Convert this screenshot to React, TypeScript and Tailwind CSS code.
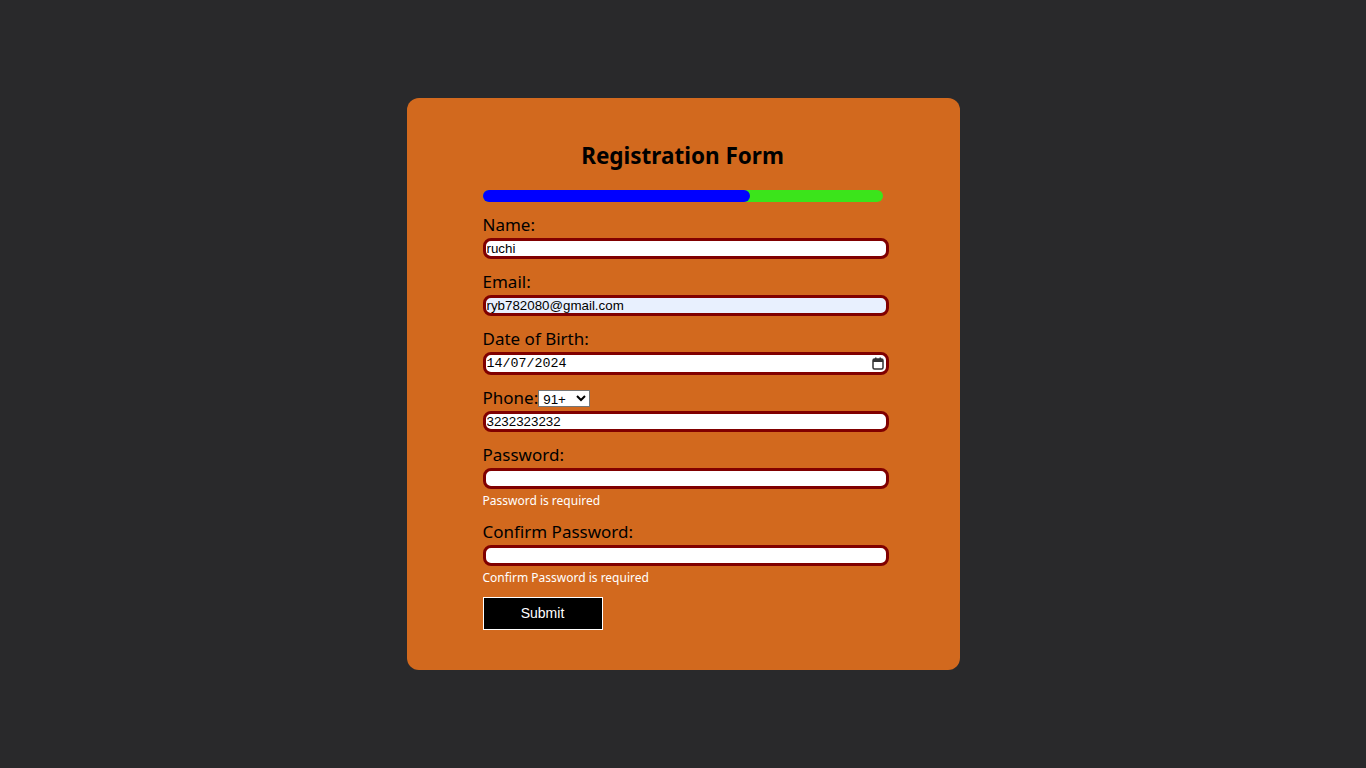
import { useState } from "react"

const labelCls = "block text-[17px] leading-6 text-black font-['Noto_Sans',sans-serif]"
const inputCls =
  "mt-px block h-[21px] w-[406px] rounded-lg border-[3px] border-[#800000] bg-white px-[1px] text-[13.33px] leading-[15px] text-black outline-none font-['Liberation_Sans',Arial,sans-serif]"
const errorCls = "mt-1 text-[12px] leading-4 text-white font-['Noto_Sans',sans-serif]"

function CalendarIcon() {
  return (
    <svg width="12" height="13" viewBox="0 0 12 13" fill="none" className="text-[#333]">
      <rect x="1" y="2" width="10" height="10" rx="1.5" stroke="currentColor" strokeWidth="1.5" />
      <rect x="1" y="2" width="10" height="3" fill="currentColor" />
      <rect x="3" y="0.5" width="1.5" height="2.5" fill="currentColor" />
      <rect x="7.5" y="0.5" width="1.5" height="2.5" fill="currentColor" />
    </svg>
  )
}

export default function App() {
  const [name, setName] = useState("ruchi")
  const [email, setEmail] = useState("ryb782080@gmail.com")
  const [phone, setPhone] = useState("3232323232")
  const [code, setCode] = useState("91+")

  return (
    <div className="flex min-h-screen items-center justify-center bg-[#29292b]">
      <div className="w-[553px] rounded-xl bg-[#d2691e] px-[76px] pt-[42px] pb-10">
        <form className="w-[400px]" onSubmit={(e) => e.preventDefault()}>
          <h2 className="text-center text-[22.5px] leading-8 font-bold text-black font-['Noto_Sans',sans-serif]">
            Registration Form
          </h2>

          {/* progress */}
          <div className="mt-[18px] h-3 w-[400px] rounded-full bg-[#3be41b]">
            <div className="h-3 w-[267px] rounded-full bg-[#0000ff]" />
          </div>

          <div className="mt-[11px]">
            <label className={labelCls}>Name:</label>
            <input className={inputCls} value={name} onChange={(e) => setName(e.target.value)} />
          </div>

          <div className="mt-[11px]">
            <label className={labelCls}>Email:</label>
            <input
              className={inputCls + " !bg-[#e8f0fe]"}
              value={email}
              onChange={(e) => setEmail(e.target.value)}
            />
          </div>

          <div className="mt-[11px]">
            <label className={labelCls}>Date of Birth:</label>
            <div className="mt-px flex h-[23px] w-[406px] items-center justify-between rounded-lg border-[3px] border-[#800000] bg-white pr-[2px] pl-[1px]">
              <span className="text-[13.33px] leading-[15px] text-black font-['Liberation_Mono',monospace]">
                14/07/2024
              </span>
              <CalendarIcon />
            </div>
          </div>

          <div className="mt-[11px]">
            <div className="flex h-6 items-center">
              <label className={labelCls}>Phone:</label>
              <select
                value={code}
                onChange={(e) => setCode(e.target.value)}
                className="mt-px h-[17px] w-[52px] border border-[#767676] bg-white text-[13.33px] leading-[15px] text-black font-['Liberation_Sans',Arial,sans-serif]"
              >
                <option>91+</option>
                <option>1+</option>
                <option>44+</option>
              </select>
            </div>
            <input className={inputCls} value={phone} onChange={(e) => setPhone(e.target.value)} />
          </div>

          <div className="mt-[11px]">
            <label className={labelCls}>Password:</label>
            <input type="password" className={inputCls} />
            <p className={errorCls}>Password is required</p>
          </div>

          <div className="mt-[11px]">
            <label className={labelCls}>Confirm Password:</label>
            <input type="password" className={inputCls} />
            <p className={errorCls}>Confirm Password is required</p>
          </div>

          <button
            type="submit"
            className="mt-[11px] h-[33px] w-[120px] border border-white bg-black text-[14px] text-white font-['Liberation_Sans',Arial,sans-serif]"
          >
            Submit
          </button>
        </form>
      </div>
    </div>
  )
}
